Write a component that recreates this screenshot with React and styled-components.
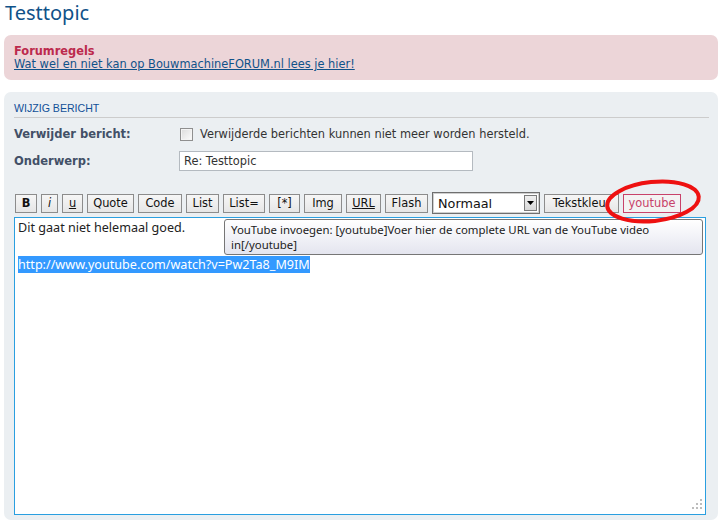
import React from 'react';
import styled, { createGlobalStyle } from 'styled-components';

const Global = createGlobalStyle`
  html, body { margin: 0; padding: 0; background: #fff; }
  body { font-family: "DejaVu Sans", Verdana, sans-serif; font-size: 11.4px; color: #333; }
  * { box-sizing: border-box; }
`;

const Page = styled.div`
  padding: 0 4px;
  width: 722px;
`;

const Title = styled.h2`
  margin: 0 0 9px 1px;
  font-family: "Noto Sans", sans-serif;
  font-weight: normal;
  font-size: 20px;
  line-height: 26px;
  color: #105289;
`;

const Rules = styled.div`
  background: #ecd5d8;
  border-radius: 7px;
  padding: 10px 10px 9px;
  line-height: 13px;
  font-size: 11.4px;
`;

const RulesTitle = styled.div`
  font-weight: bold;
  color: #bc2a4d;
`;

const RulesLink = styled.a`
  display: inline-block;
  color: #105289;
  text-decoration: underline;
`;

const Panel = styled.div`
  margin-top: 12px;
  background: #ebeff2;
  border-radius: 7px;
  padding: 10px 9px 5px 10px;
`;

const Heading = styled.h3`
  margin: 0;
  padding: 0 0 3px;
  font-family: "Liberation Sans", Arial, sans-serif;
  font-weight: normal;
  font-size: 10.6px;
  line-height: 12px;
  text-transform: uppercase;
  color: #115098;
  border-bottom: 1px solid #ccc;
`;

const Row = styled.div`
  display: flex;
  align-items: center;
  height: 20px;
  margin-top: ${p => p.$gap}px;
`;

const Label = styled.label`
  width: 165px;
  flex: none;
  font-weight: bold;
  font-size: 11.5px;
  line-height: 20px;
  color: #425067;
`;

const CheckBox = styled.span`
  width: 13px;
  height: 13px;
  margin: 0 7px 0 1px;
  border: 1px solid #8f8f8f;
  background: linear-gradient(135deg, #dcdcdc, #fcfcfc);
  box-shadow: inset 0 0 0 1px #f4f4f4;
`;

const Text = styled.span`
  font-size: 11.4px;
  color: #333;
`;

const Input = styled.div`
  width: 294px;
  height: 20px;
  border: 1px solid #b4bac0;
  background: #fff;
  padding: 0 4px;
  font-size: 11.4px;
  line-height: 18px;
  color: #333;
`;

const Toolbar = styled.div`
  display: flex;
  align-items: center;
  gap: 4px;
  height: 22px;
  margin-top: 21px;
  padding-left: 1px;
`;

const Btn = styled.span`
  width: ${p => p.$w}px;
  height: 19px;
  border: 1px solid ${p => (p.$accent ? '#c8426a' : '#8c8c8c')};
  background: ${p => (p.$accent ? '#f3f3f3' : 'linear-gradient(#f6f6f6, #e6e6e6)')};
  color: ${p => (p.$accent ? '#c8426a' : '#111')};
  font-size: 11.4px;
  line-height: 17px;
  text-align: center;
  font-weight: ${p => (p.$bold ? 'bold' : 'normal')};
  font-style: ${p => (p.$italic ? 'italic' : 'normal')};
  text-decoration: ${p => (p.$under ? 'underline' : 'none')};
  white-space: nowrap;
`;

const Select = styled.div`
  width: 108px;
  height: 22px;
  border: 1px solid #6f6f6f;
  box-shadow: inset 0 0 0 1px #cfcfcf;
  background: #fff;
  display: flex;
  align-items: center;
  justify-content: space-between;
  padding: 0 2px 0 5px;
  font-size: 12.8px;
  color: #111;
`;

const Arrow = styled.span`
  width: 13px;
  height: 16px;
  border: 1px solid #7a7a7a;
  background: linear-gradient(#f0f0f0, #d8d8d8);
  display: flex;
  align-items: center;
  justify-content: center;
`;

const EditorWrap = styled.div`
  position: relative;
  margin-top: 3px;
`;

const Editor = styled.div`
  width: 692px;
  height: 298px;
  border: 1px solid #2a9fe0;
  background: #fff;
  padding: 1px 3px 0;
  font-family: "Noto Sans", sans-serif;
  font-size: 12.6px;
  line-height: 18.3px;
  color: #222;
`;

const Selected = styled.span`
  background: #3399ff;
  color: #fff;
`;

const Tooltip = styled.div`
  position: absolute;
  left: 210px;
  top: 2px;
  width: 479px;
  height: 36px;
  border: 1px solid #767676;
  border-radius: 3px;
  background: linear-gradient(#ffffff, #e4e5ef);
  padding: 2px 6px 0;
  font-family: "Noto Sans", sans-serif;
  font-size: 11.4px;
  line-height: 15px;
  color: #222;
  white-space: nowrap;
`;

const Grip = styled.svg`
  position: absolute;
  right: 6px;
  bottom: 5px;
`;

const Circle = styled.svg`
  position: absolute;
  left: 598px;
  top: 174px;
  pointer-events: none;
`;

export default function App() {
  return (
    <>
      <Global />
      <Page>
        <Title>Testtopic</Title>
        <Rules>
          <RulesTitle>Forumregels</RulesTitle>
          <RulesLink href="#">Wat wel en niet kan op BouwmachineFORUM.nl lees je hier!</RulesLink>
        </Rules>
        <Panel>
          <Heading>Wijzig bericht</Heading>
          <Row $gap={6}>
            <Label>Verwijder bericht:</Label>
            <CheckBox />
            <Text>Verwijderde berichten kunnen niet meer worden hersteld.</Text>
          </Row>
          <Row $gap={7}>
            <Label>Onderwerp:</Label>
            <Input>Re: Testtopic</Input>
          </Row>
          <Toolbar>
            <Btn $bold $w={22}>B</Btn>
            <Btn $italic $w={17}>i</Btn>
            <Btn $under $w={21}>u</Btn>
            <Btn $w={47}>Quote</Btn>
            <Btn $w={44}>Code</Btn>
            <Btn $w={33}>List</Btn>
            <Btn $w={42}>List=</Btn>
            <Btn $w={31}>[*]</Btn>
            <Btn $w={38}>Img</Btn>
            <Btn $under $w={35}>URL</Btn>
            <Btn $w={43}>Flash</Btn>
            <Select>
              Normaal
              <Arrow>
                <svg width="7" height="4" viewBox="0 0 7 4"><path d="M0 0h7L3.5 4z" fill="#000" /></svg>
              </Arrow>
            </Select>
            <Btn $w={75}>Tekstkleur</Btn>
            <Btn $accent $w={58}>youtube</Btn>
          </Toolbar>
          <EditorWrap>
            <Editor>
              Dit gaat niet helemaal goed.
              <br />
              <br />
              <Selected>http://www.youtube.com/watch?v=Pw2Ta8_M9IM</Selected>
            </Editor>
            <Tooltip>
              YouTube invoegen: [youtube]Voer hier de complete URL van de YouTube video
              <br />
              in[/youtube]
            </Tooltip>
            <Grip width="11" height="11" viewBox="0 0 11 11">
              <g fill="#bdbdbd">
                <rect x="8" y="0" width="2" height="2" />
                <rect x="4" y="4" width="2" height="2" />
                <rect x="8" y="4" width="2" height="2" />
                <rect x="0" y="8" width="2" height="2" />
                <rect x="4" y="8" width="2" height="2" />
                <rect x="8" y="8" width="2" height="2" />
              </g>
            </Grip>
          </EditorWrap>
        </Panel>
        <Circle width="110" height="56" viewBox="0 0 110 56">
          <ellipse cx="55" cy="27.5" rx="46" ry="19.5" fill="none" stroke="#ee1111" strokeWidth="4" transform="rotate(-6 55 27.5)" />
        </Circle>
      </Page>
    </>
  );
}
